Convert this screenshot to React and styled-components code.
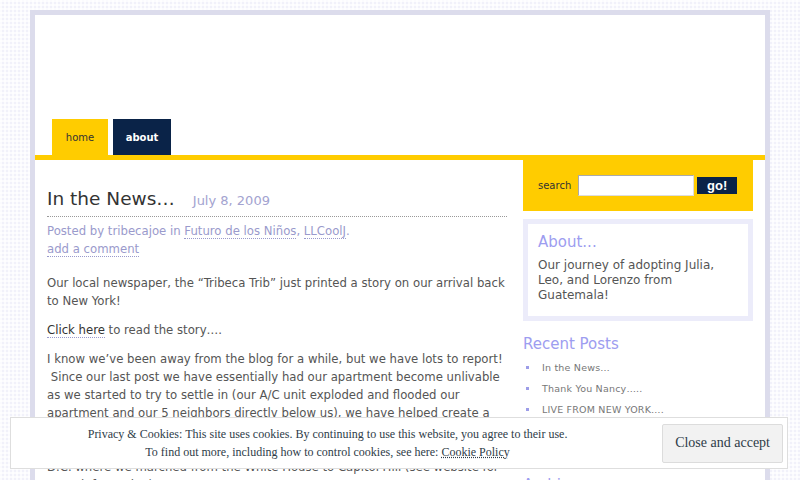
import React from "react";
import styled, { createGlobalStyle } from "styled-components";

const Global = createGlobalStyle`
  html, body { margin: 0; padding: 0; }
  html { overflow: hidden; }
  body {
    background-color: #f1f1fa;
    background-image:
      linear-gradient(90deg, rgba(255,255,255,0.75) 2px, transparent 2px),
      linear-gradient(rgba(255,255,255,0.75) 2px, transparent 2px);
    background-size: 4px 4px;
    font-family: "DejaVu Sans", "Open Sans", sans-serif;
    height: 480px;
    overflow: hidden;
  }
`;

const Page = styled.div`
  width: 730px;
  height: 465px;
  overflow: hidden;
  margin: 10px auto 0;
  border: 5px solid #dcdcec;
  border-bottom: none;
  background: #fff;
`;

const Header = styled.div`
  height: 104px;
`;

const Nav = styled.ul`
  display: flex;
  gap: 5px;
  margin: 0;
  padding: 0 0 0 17px;
  list-style: none;
  border-bottom: 5px solid #ffcc00;
`;

const Tab = styled.li`
  width: ${(p) => p.$w}px;
  height: 36px;
  display: flex;
  align-items: center;
  justify-content: center;
  font-size: 10px;
  font-weight: ${(p) => (p.$active ? 400 : 700)};
  color: ${(p) => (p.$active ? "#333" : "#fff")};
  background: ${(p) => (p.$active ? "#ffcc00" : "#0a2348")};
`;

const Body = styled.div`
  display: grid;
  grid-template-columns: 460px 230px;
  column-gap: 16px;
  padding: 0 12px;
`;

const Main = styled.div`
  padding-top: 26px;
  color: #555;
  font-size: 11.7px;
  line-height: 18px;
`;

const TitleRow = styled.div`
  display: flex;
  align-items: baseline;
  gap: 18px;
  padding-bottom: 4px;
  border-bottom: 1px dotted #999;
`;

const Title = styled.h2`
  margin: 0;
  font-size: 18.5px;
  font-weight: 400;
  line-height: 26px;
  color: #333;
`;

const DateText = styled.span`
  font-size: 13px;
  color: #a3a3d0;
`;

const Meta = styled.div`
  margin-top: 5px;
  color: #9a9acc;
  line-height: 18px;
`;

const MetaLink = styled.a`
  color: #9a9acc;
  text-decoration: none;
  border-bottom: 1px dotted #9a9acc;
`;

const Para = styled.p`
  margin: 0 0 11px;
  &:first-of-type { margin-top: 16px; }
`;

const TextLink = styled.a`
  color: #333;
  text-decoration: none;
  border-bottom: 1px dotted #9a9acc;
`;

const Side = styled.div`
  display: flex;
  flex-direction: column;
`;

const SearchBox = styled.form`
  display: flex;
  align-items: center;
  height: 51px;
  padding: 0 0 0 15px;
  background: #ffcc00;
  margin: 0;
`;

const SearchLabel = styled.label`
  font-size: 10px;
  color: #333;
  margin-right: 7px;
`;

const SearchInput = styled.input`
  width: 112px;
  height: 17px;
  margin: 0 3px 0 0;
  padding: 1px;
  border: 1px solid #aaa;
  border-right-color: #ddd;
  border-bottom-color: #ddd;
  background: #fff;
`;

const GoButton = styled.button`
  width: 40px;
  height: 17px;
  padding: 0;
  border: none;
  background: #0a2348;
  color: #fff;
  font-family: "Liberation Sans", Arial, sans-serif;
  font-weight: 700;
  font-size: 13px;
  line-height: 17px;
`;

const AboutBox = styled.div`
  margin-top: 8px;
  border: 5px solid #ececfa;
  padding: 8px 10px 13px;
  color: #555;
  font-size: 12px;
  line-height: 15px;
`;

const WidgetTitle = styled.h3`
  margin: ${(p) => (p.$flush ? "0 0 6px" : "0")};
  font-size: 15px;
  font-weight: 400;
  line-height: 20px;
  color: #9d9df0;
`;

const AboutText = styled.p`
  margin: 0;
`;

const Widget = styled.div`
  margin-top: 13px;
`;

const PostList = styled.ul`
  list-style: none;
  margin: 3px 0 0;
  padding: 0;
`;

const PostItem = styled.li`
  position: relative;
  padding-left: 19px;
  font-size: 9.5px;
  line-height: 21px;
  letter-spacing: 0.2px;
  color: #777;
  &::before {
    content: "";
    position: absolute;
    left: 3px;
    top: 9px;
    width: 3px;
    height: 3px;
    background: #9d9de8;
  }
`;

const Cookie = styled.div`
  position: fixed;
  left: 10px;
  right: 12px;
  bottom: 11px;
  height: 52px;
  box-sizing: border-box;
  display: flex;
  align-items: center;
  background: #fff;
  border: 1px solid #dedede;
  font-family: "Liberation Serif", "Times New Roman", serif;
  color: #2e3c48;
`;

const CookieText = styled.div`
  flex: 1;
  text-align: center;
  font-size: 12px;
  line-height: 18px;
  padding: 0 18px 1px 0;
`;

const CookieLink = styled.a`
  color: #2e3c48;
  text-decoration: underline dotted;
`;

const AcceptButton = styled.button`
  margin-right: 4px;
  height: 39px;
  padding: 0 12px;
  background: #f2f2f2;
  border: 1px solid #dcdcdc;
  border-radius: 2px;
  font-family: "Liberation Serif", "Times New Roman", serif;
  font-size: 14px;
  color: #2e3c48;
`;

export default function App() {
  return (
    <>
      <Global />
      <Page>
        <Header />
        <Nav>
          <Tab $active $w={56}>home</Tab>
          <Tab $w={58}>about</Tab>
        </Nav>
        <Body>
          <Main>
            <TitleRow>
              <Title>In the News…</Title>
              <DateText>July 8, 2009</DateText>
            </TitleRow>
            <Meta>
              Posted by tribecajoe in <MetaLink href="#">Futuro de los Niños</MetaLink>,{" "}
              <MetaLink href="#">LLCoolJ</MetaLink>.
              <br />
              <MetaLink href="#">add a comment</MetaLink>
            </Meta>
            <Para>
              Our local newspaper, the “Tribeca Trib” just printed a story on our arrival back
              to New York!
            </Para>
            <Para>
              <TextLink href="#">Click here</TextLink> to read the story….
            </Para>
            <Para>
              I know we’ve been away from the blog for a while, but we have lots to report!{" "}
              {"\u00a0"}Since our last post we have essentially had our apartment become unlivable
              as we started to try to settle in (our A/C unit exploded and flooded our
              apartment and our 5 neighbors directly below us), we have helped create a
              new group for families who adopted from Guatemala, and we went with the
              kids to a rally in Washington
              <br />
              D.C. where we marched from the White House to Capitol Hill (see website for
              more information).
            </Para>
          </Main>
          <Side>
            <SearchBox onSubmit={(e) => e.preventDefault()}>
              <SearchLabel>search</SearchLabel>
              <SearchInput type="text" />
              <GoButton type="submit">go!</GoButton>
            </SearchBox>
            <AboutBox>
              <WidgetTitle $flush>About...</WidgetTitle>
              <AboutText>
                Our journey of adopting Julia, Leo, and Lorenzo from Guatemala!
              </AboutText>
            </AboutBox>
            <Widget>
              <WidgetTitle>Recent Posts</WidgetTitle>
              <PostList>
                <PostItem>In the News…</PostItem>
                <PostItem>Thank You Nancy…..</PostItem>
                <PostItem>LIVE FROM NEW YORK….</PostItem>
                <PostItem>Home Sweet Home</PostItem>
                <PostItem>Leaving Guatemala</PostItem>
              </PostList>
            </Widget>
            <Widget>
              <WidgetTitle>Archives</WidgetTitle>
            </Widget>
          </Side>
        </Body>
      </Page>
      <Cookie>
        <CookieText>
          Privacy &amp; Cookies: This site uses cookies. By continuing to use this website, you agree to their use.
          <br />
          To find out more, including how to control cookies, see here:{" "}
          <CookieLink href="#">Cookie Policy</CookieLink>
        </CookieText>
        <AcceptButton>Close and accept</AcceptButton>
      </Cookie>
    </>
  );
}
